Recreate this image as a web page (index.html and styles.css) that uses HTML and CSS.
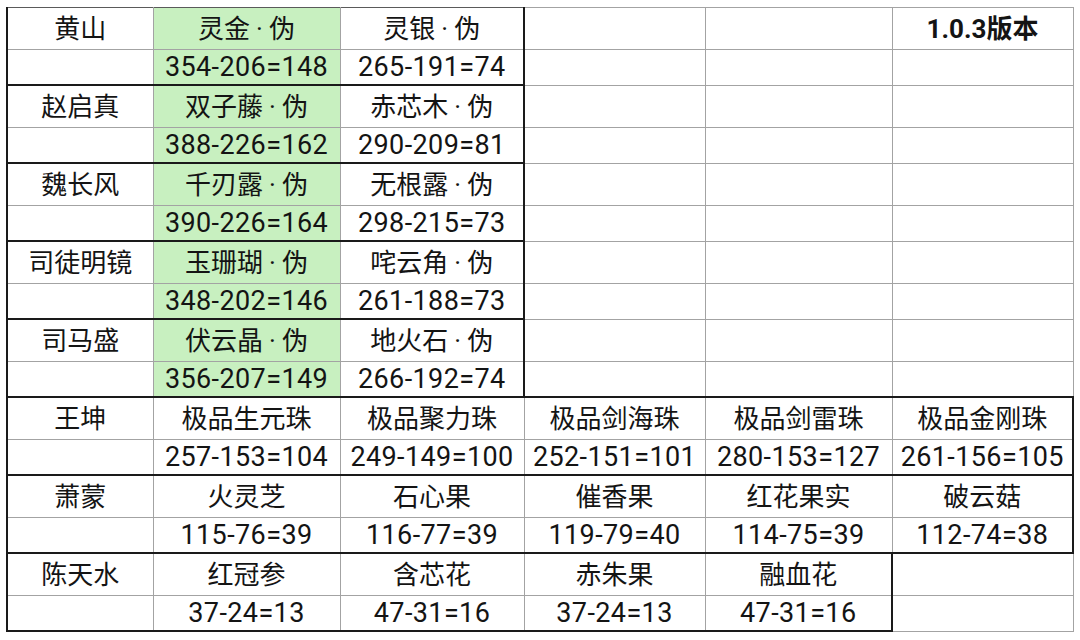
FILE: index.html
```html
<!DOCTYPE html>
<html lang="zh">
<head>
<meta charset="utf-8">
<title>1.0.3版本</title>
<link rel="stylesheet" href="styles.css">
</head>
<body>
<table class="sheet">
  <colgroup>
    <col class="w-name"><col class="w-a"><col class="w-b"><col class="w-c"><col class="w-d"><col class="w-e">
  </colgroup>
  <tbody>
    <tr class="name first">
      <td class="c0">黄山</td><td class="c1 green">灵金<span class="dot">·</span>伪</td><td class="c2">灵银<span class="dot">·</span>伪</td><td></td><td></td><td class="ver">1.0.3版本</td>
    </tr>
    <tr class="val">
      <td class="c0"></td><td class="c1 green">354-206=148</td><td class="c2">265-191=74</td><td></td><td></td><td></td>
    </tr>
    <tr class="name sep">
      <td class="c0">赵启真</td><td class="c1 green">双子藤<span class="dot">·</span>伪</td><td class="c2">赤芯木<span class="dot">·</span>伪</td><td></td><td></td><td></td>
    </tr>
    <tr class="val">
      <td class="c0"></td><td class="c1 green">388-226=162</td><td class="c2">290-209=81</td><td></td><td></td><td></td>
    </tr>
    <tr class="name sep">
      <td class="c0">魏长风</td><td class="c1 green">千刃露<span class="dot">·</span>伪</td><td class="c2">无根露<span class="dot">·</span>伪</td><td></td><td></td><td></td>
    </tr>
    <tr class="val">
      <td class="c0"></td><td class="c1 green">390-226=164</td><td class="c2">298-215=73</td><td></td><td></td><td></td>
    </tr>
    <tr class="name sep">
      <td class="c0">司徒明镜</td><td class="c1 green">玉珊瑚<span class="dot">·</span>伪</td><td class="c2">咤云角<span class="dot">·</span>伪</td><td></td><td></td><td></td>
    </tr>
    <tr class="val">
      <td class="c0"></td><td class="c1 green">348-202=146</td><td class="c2">261-188=73</td><td></td><td></td><td></td>
    </tr>
    <tr class="name sep">
      <td class="c0">司马盛</td><td class="c1 green">伏云晶<span class="dot">·</span>伪</td><td class="c2">地火石<span class="dot">·</span>伪</td><td></td><td></td><td></td>
    </tr>
    <tr class="val">
      <td class="c0"></td><td class="c1 green">356-207=149</td><td class="c2">266-192=74</td><td></td><td></td><td></td>
    </tr>

    <tr class="name full">
      <td class="c0">王坤</td><td>极品生元珠</td><td>极品聚力珠</td><td>极品剑海珠</td><td>极品剑雷珠</td><td class="edge">极品金刚珠</td>
    </tr>
    <tr class="val">
      <td class="c0"></td><td>257-153=104</td><td>249-149=100</td><td>252-151=101</td><td>280-153=127</td><td class="edge">261-156=105</td>
    </tr>
    <tr class="name full">
      <td class="c0">萧蒙</td><td>火灵芝</td><td>石心果</td><td>催香果</td><td>红花果实</td><td class="edge">破云菇</td>
    </tr>
    <tr class="val">
      <td class="c0"></td><td>115-76=39</td><td>116-77=39</td><td>119-79=40</td><td>114-75=39</td><td class="edge">112-74=38</td>
    </tr>
    <tr class="name full">
      <td class="c0">陈天水</td><td>红冠参</td><td>含芯花</td><td>赤朱果</td><td class="edge">融血花</td><td class="open"></td>
    </tr>
    <tr class="val last">
      <td class="c0"></td><td>37-24=13</td><td>47-31=16</td><td>37-24=13</td><td class="edge">47-31=16</td><td class="open"></td>
    </tr>
  </tbody>
</table>
</body>
</html>
```
FILE: styles.css
```css
html, body {
  margin: 0;
  padding: 0;
  background: #ffffff;
}

body {
  padding: 7px 0 0 6px;
  font-family: Roboto, "Noto Sans CJK SC", sans-serif;
  color: #141414;
}

.sheet {
  border-collapse: collapse;
  table-layout: fixed;
  width: 1066px;
  font-size: 26px;
}

.w-name { width: 146px; }
.w-a { width: 187px; }
.w-b { width: 184px; }
.w-c { width: 181px; }
.w-d { width: 187px; }
.w-e { width: 181px; }

.sheet td {
  border: 1px solid #a3a3a3;
  padding: 0;
  text-align: center;
  vertical-align: middle;
  white-space: nowrap;
  line-height: 1;
}

.name td { height: 41px; }

.val td {
  height: 34px;
  font-size: 27px;
  letter-spacing: 0.4px;
}

.dot {
  margin: 0 6px;
}

.sheet td.c0 { border-left: 2px solid #1a1a1a; }
.sheet td.c2 { border-right: 2px solid #1a1a1a; }

.first td.c0,
.first td.c1,
.first td.c2 { border-top: 1px solid #5a5a5a; }

.sep td.c0,
.sep td.c1,
.sep td.c2 { border-top: 2px solid #1a1a1a; }

.full td { border-top: 2px solid #1a1a1a; }
.sheet td.edge { border-right: 2px solid #1a1a1a; }

.last td { border-bottom: 2px solid #1a1a1a; }
.sheet .full td.open { border-top: 2px solid #1a1a1a; }
.sheet .last td.open { border-bottom: 1px solid #a3a3a3; }

.green { background: #c8f0c0; }

.ver {
  font-weight: 700;
  font-size: 26px;
}
```
